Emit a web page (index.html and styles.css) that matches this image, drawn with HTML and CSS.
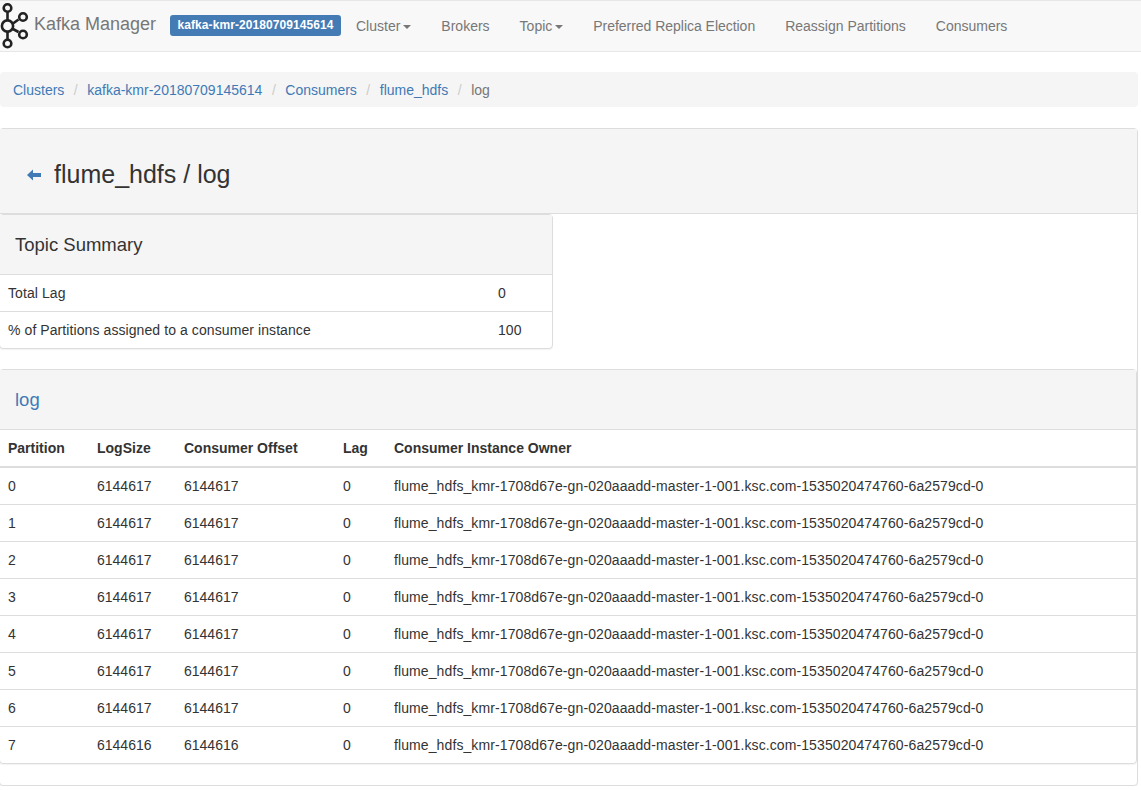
FILE: index.html
```html
<!DOCTYPE html>
<html lang="en">
<head>
  <meta charset="UTF-8">
  <title>Kafka Manager</title>
  <link rel="stylesheet" href="styles.css">
</head>
<body>
  <nav class="navbar">
    <a class="brand" href="#">
      <svg class="logo" width="30" height="50" viewBox="0 1 30 50" fill="none" stroke="#222" stroke-width="2.6">
        <path d="M7.5 12V20M7.5 32V39M13 23.5L18.5 19.5M13 29L18.5 32"/>
        <circle cx="7.5" cy="8" r="3.8"/>
        <circle cx="23" cy="17" r="3.8"/>
        <circle cx="7.5" cy="26" r="5.6"/>
        <circle cx="23" cy="34.5" r="3.8"/>
        <circle cx="7.5" cy="43.5" r="3.8"/>
      </svg>
      <span>Kafka Manager</span>
    </a>
    <span class="label">kafka-kmr-20180709145614</span>
    <a class="nav-link" href="#">Cluster<i class="caret"></i></a>
    <a class="nav-link" href="#">Brokers</a>
    <a class="nav-link" href="#">Topic<i class="caret"></i></a>
    <a class="nav-link tight" href="#">Preferred Replica Election</a>
    <a class="nav-link" href="#">Reassign Partitions</a>
    <a class="nav-link" href="#">Consumers</a>
  </nav>

  <ol class="breadcrumb">
    <li><a href="#">Clusters</a></li>
    <li><a href="#">kafka-kmr-20180709145614</a></li>
    <li><a href="#">Consumers</a></li>
    <li><a href="#">flume_hdfs</a></li>
    <li class="active">log</li>
  </ol>

  <div class="panel outer">
    <div class="panel-heading page-heading">
      <h2>
        <a class="back" href="#">
          <svg width="14" height="12" viewBox="0 0 14 12" fill="#3f7ab6"><path d="M0 6L6 .5V4H14V8H6V11.5Z"/></svg>
        </a>
        flume_hdfs / log
      </h2>
    </div>

    <div class="panel summary">
      <div class="panel-heading"><h3>Topic Summary</h3></div>
      <table class="summary-table">
        <tbody>
          <tr><td>Total Lag</td><td class="val">0</td></tr>
          <tr><td>% of Partitions assigned to a consumer instance</td><td class="val">100</td></tr>
        </tbody>
      </table>
    </div>

    <div class="panel partitions">
      <div class="panel-heading"><h3><a href="#">log</a></h3></div>
      <table class="partition-table">
        <thead>
          <tr>
            <th class="c1">Partition</th>
            <th class="c2">LogSize</th>
            <th class="c3">Consumer Offset</th>
            <th class="c4">Lag</th>
            <th>Consumer Instance Owner</th>
          </tr>
        </thead>
        <tbody>
          <tr><td>0</td><td>6144617</td><td>6144617</td><td>0</td><td class="owner">flume_hdfs_kmr-1708d67e-gn-020aaadd-master-1-001.ksc.com-1535020474760-6a2579cd-0</td></tr>
          <tr><td>1</td><td>6144617</td><td>6144617</td><td>0</td><td class="owner">flume_hdfs_kmr-1708d67e-gn-020aaadd-master-1-001.ksc.com-1535020474760-6a2579cd-0</td></tr>
          <tr><td>2</td><td>6144617</td><td>6144617</td><td>0</td><td class="owner">flume_hdfs_kmr-1708d67e-gn-020aaadd-master-1-001.ksc.com-1535020474760-6a2579cd-0</td></tr>
          <tr><td>3</td><td>6144617</td><td>6144617</td><td>0</td><td class="owner">flume_hdfs_kmr-1708d67e-gn-020aaadd-master-1-001.ksc.com-1535020474760-6a2579cd-0</td></tr>
          <tr><td>4</td><td>6144617</td><td>6144617</td><td>0</td><td class="owner">flume_hdfs_kmr-1708d67e-gn-020aaadd-master-1-001.ksc.com-1535020474760-6a2579cd-0</td></tr>
          <tr><td>5</td><td>6144617</td><td>6144617</td><td>0</td><td class="owner">flume_hdfs_kmr-1708d67e-gn-020aaadd-master-1-001.ksc.com-1535020474760-6a2579cd-0</td></tr>
          <tr><td>6</td><td>6144617</td><td>6144617</td><td>0</td><td class="owner">flume_hdfs_kmr-1708d67e-gn-020aaadd-master-1-001.ksc.com-1535020474760-6a2579cd-0</td></tr>
          <tr><td>7</td><td>6144616</td><td>6144616</td><td>0</td><td class="owner">flume_hdfs_kmr-1708d67e-gn-020aaadd-master-1-001.ksc.com-1535020474760-6a2579cd-0</td></tr>
        </tbody>
      </table>
    </div>
  </div>
</body>
</html>
```

FILE: styles.css
```css
* {
  box-sizing: border-box;
}
body {
  margin: 0;
  font-family: "Liberation Sans", Arial, sans-serif;
  font-size: 14px;
  line-height: 20px;
  color: #333;
  background: #fff;
  overflow-x: hidden;
}
a {
  color: #3f7ab6;
  text-decoration: none;
}
h2, h3 {
  margin: 0;
  font-weight: 500;
}

/* navbar */
.navbar {
  display: flex;
  align-items: center;
  height: 52px;
  background: #f8f8f8;
  border-top: 1px solid #e7e7e7;
  border-bottom: 1px solid #e7e7e7;
}
.brand {
  display: flex;
  align-items: center;
  color: #777;
  font-size: 18px;
  width: 170px;
}
.logo {
  flex: none;
  margin-right: 4px;
}
.brand span {
  margin-top: -5px;
}
.label {
  width: 171px;
  height: 21px;
  margin-top: -2px;
  background: #447bb5;
  border-radius: 3px;
  color: #fff;
  font-size: 12px;
  font-weight: bold;
  line-height: 21px;
  letter-spacing: 0.08px;
  text-align: center;
}
.nav-link {
  color: #777;
  padding: 0 15px;
}
.nav-link.tight {
  letter-spacing: -0.03px;
}
.caret {
  display: inline-block;
  margin-left: 3px;
  vertical-align: middle;
  border-top: 4px solid #777;
  border-left: 4px solid transparent;
  border-right: 4px solid transparent;
}

/* breadcrumb */
.breadcrumb {
  display: flex;
  list-style: none;
  width: 1138px;
  height: 35px;
  margin: 20px 0 21px;
  padding: 8px 0 0 13px;
  background: #f5f5f5;
  border-radius: 4px;
}
.breadcrumb li + li::before {
  content: "/";
  color: #ccc;
  padding: 0 9.5px;
}
.breadcrumb .active {
  color: #777;
}

/* panels */
.panel {
  background: #fff;
  border: 1px solid #ddd;
  border-radius: 4px;
  box-shadow: 0 1px 1px rgba(0,0,0,0.05);
}
.panel-heading {
  background: #f5f5f5;
  border-bottom: 1px solid #ddd;
  padding: 0 15px;
}
.outer {
  width: 1139px;
  height: 658px;
  margin-left: -1px;
}
.page-heading {
  height: 85px;
  padding: 27px 0 0 27px;
}
.page-heading h2 {
  display: flex;
  align-items: center;
  font-size: 25px;
  line-height: 36px;
}
.back {
  display: flex;
  margin: 2px 13px 0 0;
}
.summary {
  width: 554px;
  height: 135px;
  margin: 0 0 20px -1px;
}
.summary .panel-heading, .partitions .panel-heading {
  height: 60px;
  padding-top: 20px;
}
.panel-heading h3 {
  font-size: 18.5px;
  line-height: 20px;
}
.partitions {
  width: 1138px;
  height: 395px;
  margin-left: -1px;
}
table {
  width: 100%;
  border-collapse: collapse;
}
td, th {
  height: 37px;
  padding: 8px;
  text-align: left;
  border-top: 1px solid #ddd;
}
tbody tr:first-child td {
  border-top: 0;
}
.summary-table td {
  height: 36px;
  letter-spacing: 0.085px;
}
.val {
  width: 63px;
  padding-left: 9px;
}
.owner {
  letter-spacing: 0.1px;
}
th {
  height: 37px;
  border-top: 0;
  border-bottom: 2px solid #ddd;
}
.c1 { width: 89px; }
.c2 { width: 87px; }
.c3 { width: 159px; }
.c4 { width: 51px; }
```
